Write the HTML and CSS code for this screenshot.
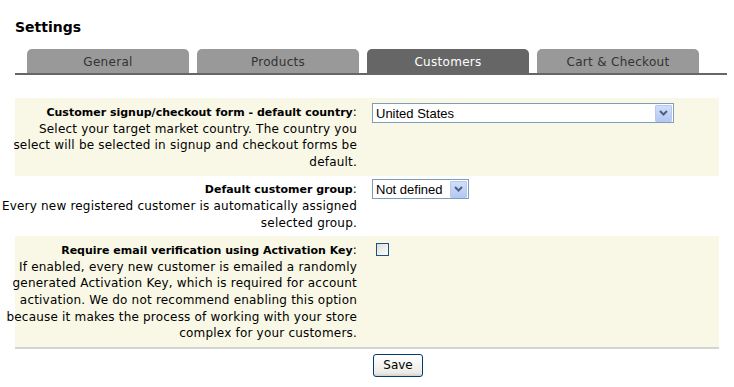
FILE: index.html
```html
<!DOCTYPE html>
<html lang="en">
<head>
<meta charset="UTF-8">
<title>Settings</title>
<link rel="stylesheet" href="styles.css">
</head>
<body>
<h2 class="title">Settings</h2>
<div class="tabs">
  <a class="tab">General</a>
  <a class="tab">Products</a>
  <a class="tab active">Customers</a>
  <a class="tab">Cart &amp; Checkout</a>
</div>

<form class="settings">
  <div class="row shaded">
    <div class="label"><b>Customer signup/checkout form - default country</b>:<br>Select your target market country. The country you select will be selected in signup and checkout forms be default.</div>
    <div class="value">
      <span class="select wide">
        <select><option>United States</option></select>
        <span class="arrow"><svg width="9" height="6" viewBox="0 0 9 6"><path d="M1 1l3.5 3.5L8 1" fill="none" stroke="#4d6185" stroke-width="2"/></svg></span>
      </span>
    </div>
  </div>
  <div class="row compact">
    <div class="label"><b>Default customer group</b>:<br>Every new registered customer is automatically assigned selected group.</div>
    <div class="value">
      <span class="select">
        <select><option>Not defined</option></select>
        <span class="arrow"><svg width="9" height="6" viewBox="0 0 9 6"><path d="M1 1l3.5 3.5L8 1" fill="none" stroke="#4d6185" stroke-width="2"/></svg></span>
      </span>
    </div>
  </div>
  <div class="row shaded last">
    <div class="label"><b>Require email verification using Activation Key</b>:<br>If enabled, every new customer is emailed a randomly generated Activation Key, which is required for account activation. We do not recommend enabling this option because it makes the process of working with your store complex for your customers.</div>
    <div class="value"><input type="checkbox" class="check"></div>
  </div>
  <div class="actions">
    <button type="button" class="btn">Save</button>
  </div>
</form>
</body>
</html>
```

FILE: styles.css
```css
body{margin:0;padding:0 7px 0 15px;background:#fff;color:#000;font-family:"DejaVu Sans",Verdana,sans-serif;font-size:12px;letter-spacing:0.2px;}

.title{margin:0;padding-top:19px;height:30px;font-size:14px;font-weight:bold;line-height:17px;letter-spacing:0;}

.tabs{display:flex;gap:8px;padding-left:12px;border-bottom:2px solid #666;height:24px;}
.tab{width:162px;height:24px;background:#999;color:#333;border-radius:5px 5px 0 0;text-align:center;font-size:12px;line-height:27px;letter-spacing:0.3px;}
.tab.active{background:#666;color:#fff;}

.settings{margin-top:23px;width:704px;}

.row{display:grid;grid-template-columns:342px 1fr;padding:6px 0;line-height:16.6px;}
.row.compact{padding:5px 0;}
.row.shaded{background:#f9f8e6;}
.row.last{border-bottom:2px solid #d4d4d0;padding-bottom:5px;}

.label{text-align:right;margin-left:-15px;}
.label b{font-size:11px;line-height:1;letter-spacing:0;}
.value{padding-left:15px;}

.select{display:inline-flex;align-items:center;height:18px;border:1px solid #7f9db9;background:#fff;vertical-align:top;margin-top:-1px;letter-spacing:0;}
.compact .select{margin-top:-2px;}
.select select{appearance:none;border:0;background:transparent;font-family:"Liberation Sans",Arial,sans-serif;font-size:13px;padding:0 3px;height:18px;width:76px;color:#000;}
.select.wide select{width:281px;}
.arrow{width:15px;height:15px;margin:0 1px;border:1px solid #b6c9f4;border-radius:1px;background:linear-gradient(#d2def9,#b4c8f4);display:flex;align-items:center;justify-content:center;}

.check{appearance:none;width:13px;height:13px;margin:0 0 0 4px;border:1px solid #1c5180;background:linear-gradient(135deg,#dcdcd7,#fff);vertical-align:top;position:relative;top:1px;}

.actions{padding:5px 0 0 358px;}
.btn{width:50px;height:23px;border:1px solid #003c74;border-radius:3px;background:linear-gradient(#fff,#ecebe6 85%,#d6d0c5);font-family:"DejaVu Sans",Verdana,sans-serif;font-size:12px;color:#000;padding:0;}
```
